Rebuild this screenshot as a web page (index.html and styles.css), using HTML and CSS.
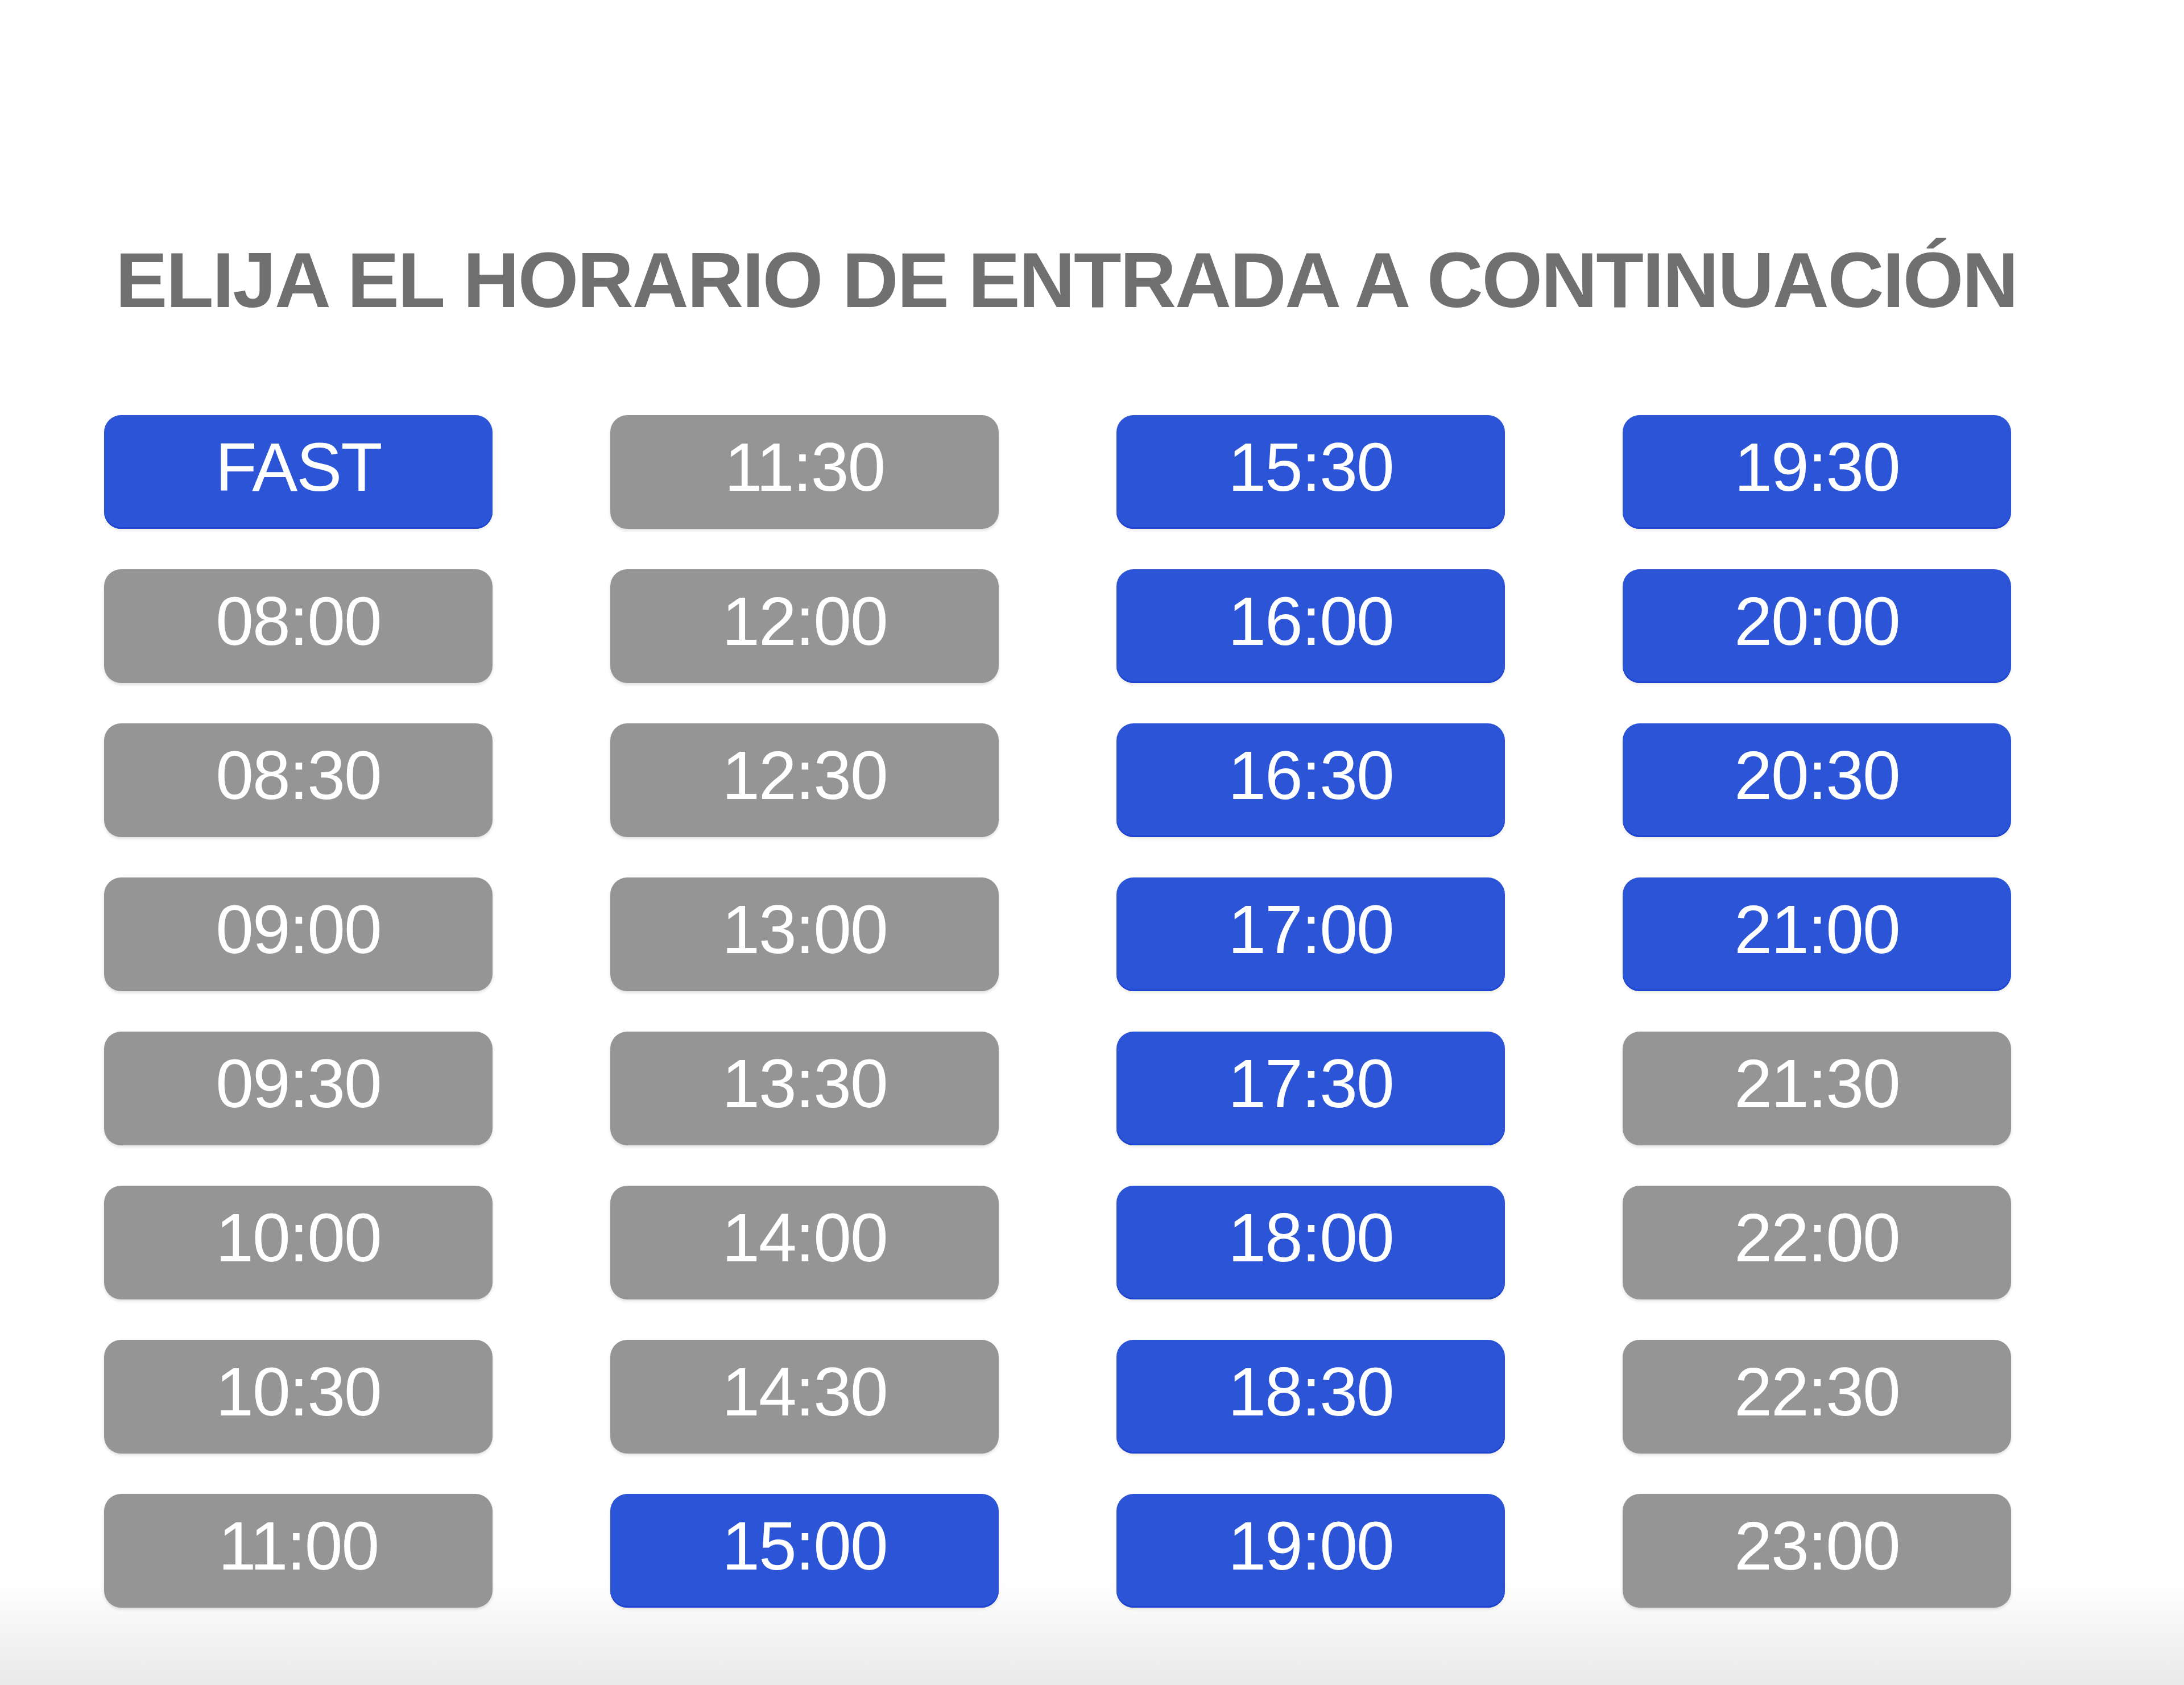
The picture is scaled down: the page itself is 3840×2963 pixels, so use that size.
FILE: index.html
```html
<!DOCTYPE html>
<html lang="es">
<head>
  <meta charset="UTF-8">
  <meta name="viewport" content="width=device-width, initial-scale=1.0">
  <title>Horario de entrada</title>
  <link rel="stylesheet" href="styles.css">
</head>
<body>
  <div class="page">
    <h1 class="title">ELIJA EL HORARIO DE ENTRADA A CONTINUACIÓN</h1>

    <!-- the grid fills column by column, 8 slots each -->
    <div class="slots">
      <button class="slot open">FAST</button>
      <button class="slot">08:00</button>
      <button class="slot">08:30</button>
      <button class="slot">09:00</button>
      <button class="slot">09:30</button>
      <button class="slot">10:00</button>
      <button class="slot">10:30</button>
      <button class="slot">11:00</button>

      <button class="slot">11:30</button>
      <button class="slot">12:00</button>
      <button class="slot">12:30</button>
      <button class="slot">13:00</button>
      <button class="slot">13:30</button>
      <button class="slot">14:00</button>
      <button class="slot">14:30</button>
      <button class="slot open">15:00</button>

      <button class="slot open">15:30</button>
      <button class="slot open">16:00</button>
      <button class="slot open">16:30</button>
      <button class="slot open">17:00</button>
      <button class="slot open">17:30</button>
      <button class="slot open">18:00</button>
      <button class="slot open">18:30</button>
      <button class="slot open">19:00</button>

      <button class="slot open">19:30</button>
      <button class="slot open">20:00</button>
      <button class="slot open">20:30</button>
      <button class="slot open">21:00</button>
      <button class="slot">21:30</button>
      <button class="slot">22:00</button>
      <button class="slot">22:30</button>
      <button class="slot">23:00</button>
    </div>
  </div>
</body>
</html>
```

FILE: styles.css
```css
html, body {
  margin: 0;
  padding: 0;
}

body {
  font-family: "Liberation Sans", Arial, Helvetica, sans-serif;
  min-height: 2963px;
  background: linear-gradient(to bottom, #fff 0, #fff 2780px, #e9e9e9 2963px);
}

.page {
  padding: 0 0 0 183px;
}

.title {
  margin: 414px 0 0;
  padding-left: 20px;
  font-size: 137px;
  font-weight: bold;
  letter-spacing: -2.3px;
  color: #707070;
  white-space: nowrap;
}

.slots {
  display: grid;
  grid-template-columns: repeat(4, 683px);
  grid-template-rows: repeat(8, 200px);
  grid-auto-flow: column;
  column-gap: 207px;
  row-gap: 71px;
  margin-top: 159px;
}

.slot {
  display: flex;
  justify-content: center;
  align-items: center;
  padding: 0 0 18px;
  border: none;
  border-radius: 30px;
  background-color: #959595;
  color: #fff;
  font-family: "Liberation Sans", Arial, Helvetica, sans-serif;
  font-size: 120px;
  letter-spacing: -2px;
  box-shadow: 0 3px 5px rgba(0, 0, 0, 0.12);
  cursor: pointer;
}

.slot.open {
  background-color: #2b54d7;
  box-shadow: inset 0 -3px 0 #1f45d0, 0 3px 5px rgba(120, 100, 40, 0.12);
}
```
